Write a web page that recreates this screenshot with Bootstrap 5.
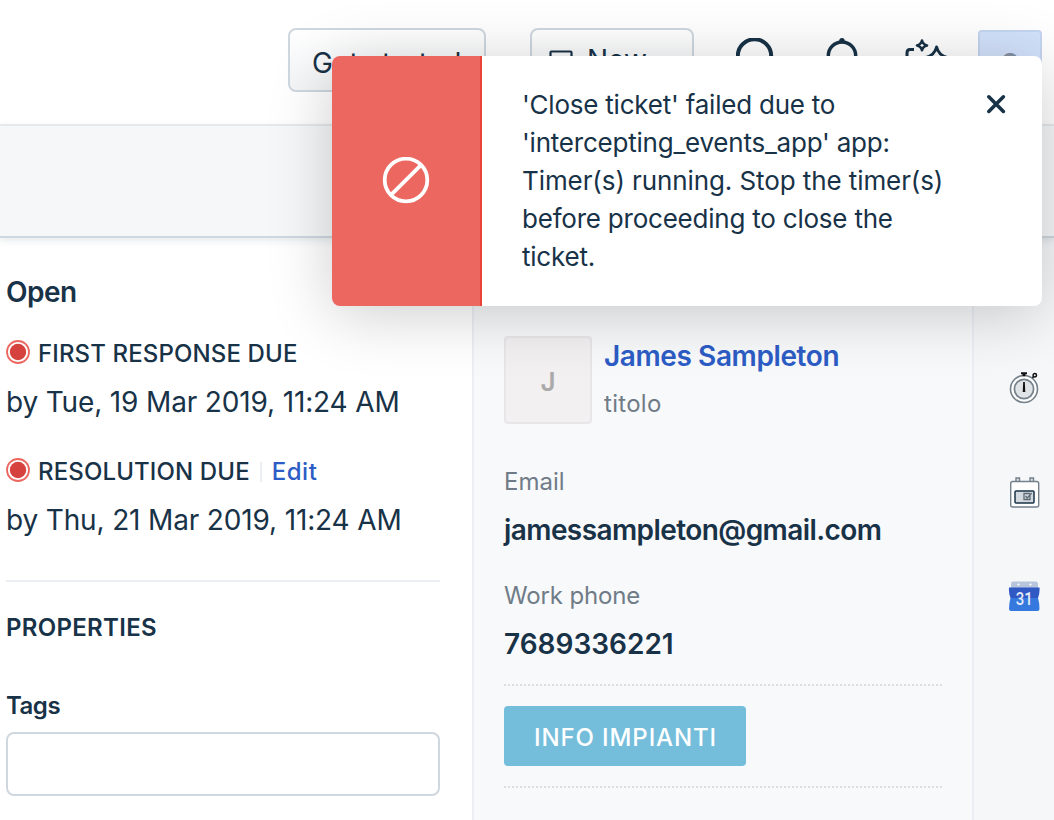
<!DOCTYPE html>
<html lang="en">
<head>
<meta charset="utf-8">
<meta name="viewport" content="width=device-width, initial-scale=1">
<title>Ticket details</title>
<link href="https://cdn.jsdelivr.net/npm/bootstrap@5.3.0/dist/css/bootstrap.min.css" rel="stylesheet">
<style>
  body { font-family: Inter, "Liberation Sans", sans-serif; color: #183247; background: #fff; height: 820px; overflow: hidden; position: relative; }
  .topbar { height: 126px; border-bottom: 2px solid #ebeff3; padding: 28px 12px 0 288px; }
  .btn-top { height: 64px; border: 2px solid #cfd7df; border-radius: 8px; font-size: 28px; line-height: 38px; color: #183247; background: linear-gradient(#fff, #f3f5f7); white-space: nowrap; }
  .btn-start { width: 198px; padding: 14px 0 8px 22px; letter-spacing: .2px; }
  .btn-new { width: 164px; margin-left: 44px; padding: 11px 0 11px 17px; }
  .new-icon { margin-right: 14px; }
  .search-icon { margin: 10px 0 0 42px; }
  .bell-icon { margin: 9px 0 0 50px; }
  .spark-icon { margin: 10px 0 0 44px; }
  .user-tile { width: 64px; height: 64px; border: 2px solid #c4d5f1; border-radius: 4px; background: #d2e2fb; margin-top: 2px; color: #8591a3; font-size: 26px; font-weight: 600; line-height: 62px; }
  .subbar { height: 112px; background: #f5f7f9; border-bottom: 2px solid #cfd7df; box-shadow: 0 2px 8px rgba(24,50,71,.12); position: relative; }
  .workspace { height: 582px; }
  .col-ticket { width: 474px; border-right: 2px solid #ebeff3; padding: 36px 32px 0 6px; }
  .col-contact { width: 500px; background: #f8f9fb; border-right: 2px solid #ebeef5; padding: 98px 28px 0 30px; }
  .col-apps { background: #f5f7f9; padding: 134px 14px 0 34px; }
  .t28 { font-size: 28px; line-height: 36px; white-space: nowrap; }
  .t24 { font-size: 24px; line-height: 30px; white-space: nowrap; padding-top: 1px; margin-bottom: -1px; }
  .status { font-weight: 600; letter-spacing: -.5px; }
  .due-head { font-weight: 500; }
  .due-head span { letter-spacing: .13px; }
  .due-dot { width: 24px; height: 24px; margin: 1px 8px 0 0; }
  .due-date { margin-top: 16px; letter-spacing: -.15px; }
  .edit-link { color: #2c5cc5; border-left: 2px solid #ebeff3; line-height: 20px; padding-left: 10px; margin: 5px 0 0 10px; letter-spacing: .5px; }
  .rule { height: 2px; background: #ebeff3; margin-top: 42px; }
  .section-title { margin-top: 30px; font-weight: 600; letter-spacing: .3px; }
  .field-label { margin-top: 48px; font-weight: 600; letter-spacing: -.5px; }
  .tag-input { height: 64px; border: 2px solid #cfd7df; border-radius: 8px; margin-top: 12px; }
  .face { width: 88px; height: 88px; border: 2px solid #e7e6e8; border-radius: 4px; background: #f3f0f1; color: #aaa; font-size: 26px; font-weight: 600; line-height: 87px; }
  .contact-head { margin: 2px 0 0 12px; }
  .contact-name { color: #2c5cc5; font-weight: 600; letter-spacing: -.4px; }
  .contact-title { margin-top: 14px; letter-spacing: .3px; }
  .muted-label { color: #6f7c87; }
  .contact-value { margin-top: 16px; font-weight: 600; }
  .contact-mail { letter-spacing: -.58px; }
  .dots { height: 2px; width: 438px; background: repeating-linear-gradient(90deg, #dddee0 0 2px, transparent 2px 4px); }
  .btn-plant { width: 242px; height: 60px; background: #74bddb; color: #fff; border: 0; border-radius: 4px; font-size: 24px; font-weight: 500; letter-spacing: .9px; line-height: 30px; padding: 4px 0 0 1px; margin: 20px 0; }
  .notice { position: absolute; left: 332px; top: 56px; width: 710px; height: 250px; border-radius: 8px; background: #fff; box-shadow: 0 8px 64px rgba(0,0,0,.2); z-index: 10; }
  .notice-side { width: 150px; background: #ec6760; border-right: 2px solid #ea4238; border-radius: 8px 0 0 8px; }
  .notice-text { font-size: 26px; line-height: 38px; padding: 30px 0 0 40px; white-space: nowrap; letter-spacing: -.22px; }
  .notice-text .wide { letter-spacing: -.09px; }
  .close-icon { margin: 38px 36px 0 0; }
</style>
</head>
<body>
<header class="topbar d-flex align-items-start">
  <button class="btn-top btn-start text-start flex-shrink-0">Get started</button>
  <button class="btn-top btn-new d-flex align-items-center flex-shrink-0">
    <svg width="24" height="20" viewBox="0 0 24 20" class="new-icon" fill="none" stroke="#183247" stroke-width="2.200"><rect x="1.500" y="1.500" width="21" height="17" rx="1"/></svg>New
  </button>
  <svg width="38" height="44" viewBox="0 0 38 44" class="search-icon flex-shrink-0" fill="none" stroke="#183247" stroke-width="4"><circle cx="18.500" cy="18" r="16.700"/><path d="M30 30l7 9"/></svg>
  <svg width="36" height="44" viewBox="0 0 36 44" class="bell-icon flex-shrink-0" fill="none" stroke="#183247" stroke-width="3.400"><path d="M4.300 32V18.700a13.700 13.700 0 0 1 27.400 0V32z"/><circle cx="18" cy="3.700" r="2.700" fill="#183247" stroke="none"/></svg>
  <svg width="44" height="44" viewBox="0 0 44 44" class="spark-icon flex-shrink-0" fill="none" stroke="#183247" stroke-width="3" stroke-linejoin="round"><path d="M10 11.500H6Q3 11.500 3 15v20h26"/><path d="M18 2.500Q18.900 6.500 23 7.400Q18.900 8.300 18 12.300Q17.100 8.300 13 7.400Q17.100 6.500 18 2.500Z" stroke-width="2.600"/><path d="M32.600 9Q34.500 17 43 19.500Q34.500 22 32.600 30Q30.700 22 22 19.500Q30.700 17 32.600 9Z"/></svg>
  <div class="user-tile text-center ms-auto flex-shrink-0">S</div>
</header>
<div class="subbar"></div>
<main class="workspace d-flex">
  <section class="col-ticket flex-shrink-0">
    <div class="t28 status">Open</div>
    <div class="t24 due-head d-flex align-items-start" style="margin-top:28px">
      <svg class="due-dot" viewBox="0 0 24 24"><circle cx="12" cy="12" r="11" fill="#fff" stroke="#ec6760" stroke-width="1.800"/><circle cx="12" cy="12" r="8.200" fill="#d6423d"/></svg>
      <span>FIRST RESPONSE DUE</span>
    </div>
    <div class="t28 due-date">by Tue, 19 Mar 2019, 11:24 AM</div>
    <div class="t24 due-head d-flex align-items-start" style="margin-top:36px">
      <svg class="due-dot" viewBox="0 0 24 24"><circle cx="12" cy="12" r="11" fill="#fff" stroke="#ec6760" stroke-width="1.800"/><circle cx="12" cy="12" r="8.200" fill="#d6423d"/></svg>
      <span>RESOLUTION DUE</span><a class="edit-link text-decoration-none">Edit</a>
    </div>
    <div class="t28 due-date">by Thu, 21 Mar 2019, 11:24 AM</div>
    <div class="rule"></div>
    <div class="t24 section-title">PROPERTIES</div>
    <div class="t24 field-label">Tags</div>
    <div class="tag-input"></div>
  </section>
  <section class="col-contact flex-shrink-0">
    <div class="d-flex">
      <div class="face text-center">J</div>
      <div class="contact-head">
        <div class="t28 contact-name">James Sampleton</div>
        <div class="t24 muted-label contact-title">titolo</div>
      </div>
    </div>
    <div class="t24 muted-label" style="margin-top:42px">Email</div>
    <div class="t28 contact-value contact-mail">jamessampleton@gmail.com</div>
    <div class="t24 muted-label" style="margin-top:32px;letter-spacing:-.15px">Work phone</div>
    <div class="t28 contact-value">7689336221</div>
    <div class="dots" style="margin-top:22px"></div>
    <button class="btn-plant d-block">INFO IMPIANTI</button>
    <div class="dots"></div>
  </section>
  <aside class="col-apps flex-grow-1">
    <svg class="d-block" width="32" height="34" viewBox="0 0 32 34"><circle cx="16" cy="17" r="13.500" fill="#fff" stroke="#74808a" stroke-width="1.600"/><circle cx="16" cy="17" r="9.600" fill="#dfe3e6" stroke="#74808a" stroke-width="1.700"/><path d="M15.200 10h1.600l.5 10h-2.600z" fill="#111"/><path d="M13 .3h6v2h-1.500v2h-3v-2H13z" fill="#111"/><circle cx="26.800" cy="3.200" r="1.700" fill="none" stroke="#111" stroke-width="1.500"/><path d="M24.500 6l1-1.500" stroke="#111" stroke-width="1.500"/></svg>
    <svg class="d-block" style="margin-top:70px" width="32" height="34" viewBox="0 0 32 34"><g stroke="#74808a" stroke-width="1.400"><path d="M8 6V2h3.500v4M22 6V2h3.500v4" fill="#dfe3e6"/><rect x="2.700" y="5.500" width="28" height="25.500" rx="2" fill="#fff"/></g><rect x="7" y="15" width="19" height="12" rx="1" fill="#d3d9de" stroke="#183247" stroke-width="1.500"/><path d="M22 17.500h-6v6h6v-4M17.500 20l1.700 2 4.500-5" fill="none" stroke="#5e6a75" stroke-width="1.300"/></svg>
    <svg class="d-block" style="margin-top:69px" width="32" height="34" viewBox="0 0 32 34"><rect x="3" y="2.500" width="27" height="9" rx="2" fill="#b7c5dc"/><circle cx="10.500" cy="5.500" r="1.100" fill="#fff"/><circle cx="22.500" cy="5.500" r="1.100" fill="#fff"/><path d="M1 8.500h30.500q.5 5-1.500 10.500H2.500Q.5 14 1 8.500z" fill="#3059c4"/><path d="M2.500 19H30q1.500 5 1.500 10.500 0 2.500-2 2.500H3Q1 32 1 29.500q0-5 1.500-10.500z" fill="#3579de"/><text x="16.200" y="25.500" text-anchor="middle" font-family="Roboto, sans-serif" font-size="18.500" font-weight="500" textLength="17" lengthAdjust="spacingAndGlyphs" fill="#e6ecf8">31</text></svg>
  </aside>
</main>
<div class="notice d-flex" role="alert">
  <div class="notice-side d-flex align-items-center justify-content-center flex-shrink-0">
    <svg width="48" height="48" viewBox="0 0 48 48" fill="none" stroke="#fff" stroke-width="3.800"><circle cx="24" cy="23" r="21.300"/><path d="M39.200 7.800L8.800 38.200"/></svg>
  </div>
  <div class="notice-text">'Close ticket' failed due to<br>'intercepting_events_app' app:<br><span class="wide">Timer(s) running. Stop the timer(s)</span><br>before proceeding to close the<br>ticket.</div>
  <svg class="close-icon ms-auto flex-shrink-0" width="20" height="20" viewBox="0 0 20 20" stroke="#183247" stroke-width="3.600" stroke-linecap="round"><path d="M2.800 2.800l14.600 14.600M17.400 2.800L2.800 17.400"/></svg>
</div>
<script src="https://cdn.jsdelivr.net/npm/bootstrap@5.3.0/dist/js/bootstrap.bundle.min.js"></script>
</body>
</html>
